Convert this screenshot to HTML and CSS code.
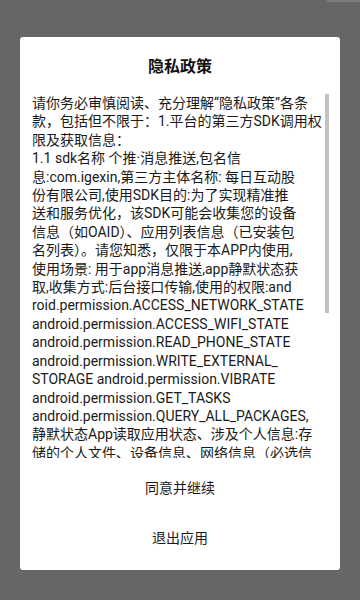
FILE: index.html
```html
<!DOCTYPE html>
<html lang="zh">
<head>
<meta charset="utf-8">
<link rel="stylesheet" href="styles.css">
</head>
<body>
<div class="screen">
  <div class="status-strip"></div>
  <div class="dialog">
    <div class="title">隐私政策</div>
    <div class="content-row">
      <div class="content">
        <p class="text">请你务必审慎阅读、充分理解“隐私政策”各条<br>款，包括但不限于：1.平台的第三方SDK调用权<br>限及获取信息：<br>1.1 sdk名称 个推·消息推送,包名信<br>息:com.igexin,第三方主体名称: 每日互动股<br>份有限公司,使用SDK目的:为了实现精准推<br>送和服务优化，该SDK可能会收集您的设备<br>信息（如OAID）、应用列表信息（已安装包<br>名列表）。请您知悉，仅限于本APP内使用,<br>使用场景: 用于app消息推送,app静默状态获<br>取,收集方式:后台接口传输,使用的权限:and<br>roid.permission.ACCESS_NETWORK_STATE<br>android.permission.ACCESS_WIFI_STATE<br>android.permission.READ_PHONE_STATE<br>android.permission.WRITE_EXTERNAL_<br>STORAGE android.permission.VIBRATE<br>android.permission.GET_TASKS<br>android.permission.QUERY_ALL_PACKAGES,<br>静默状态App读取应用状态、涉及个人信息:存<br>储的个人文件、设备信息、网络信息（必选信</p>
      </div>
      <div class="track"><div class="thumb"></div></div>
    </div>
    <div class="btn">同意并继续</div>
    <div class="btn">退出应用</div>
  </div>
</div>
</body>
</html>
```
FILE: styles.css
```css
html, body {
  margin: 0;
  padding: 0;
}
body {
  background: #666666;
  font-family: Roboto, "Noto Sans CJK SC", sans-serif;
  color: #1a1a1a;
}
.screen {
  position: relative;
  width: 360px;
  height: 600px;
  padding-top: 37px;
  box-sizing: border-box;
}
.status-strip {
  position: absolute;
  top: 0;
  left: 327px;
  width: 33px;
  height: 2px;
  background: #7c7c7c;
}
.dialog {
  margin-left: 20px;
  width: 320px;
  height: 533px;
  background: #ffffff;
  border-radius: 3px;
  display: flex;
  flex-direction: column;
}
.title {
  height: 57px;
  line-height: 20px;
  padding-top: 20px;
  box-sizing: border-box;
  text-align: center;
  font-size: 16px;
  font-weight: bold;
  color: #111;
}
.content-row {
  display: flex;
  height: 364px;
  padding-left: 12px;
}
.content {
  width: 293px;
  height: 364px;
  overflow: hidden;
}
.text {
  margin: 0;
  font-size: 14px;
  line-height: 18.4px;
  white-space: nowrap;
}
.track {
  width: 4px;
  height: 364px;
}
.thumb {
  width: 4px;
  height: 219px;
  background: #c2c2c2;
}
.btn {
  height: 50px;
  line-height: 50px;
  text-align: center;
  font-size: 14px;
  color: #1a1a1a;
}
.content-row + .btn {
  margin-top: 5px;
}
```
